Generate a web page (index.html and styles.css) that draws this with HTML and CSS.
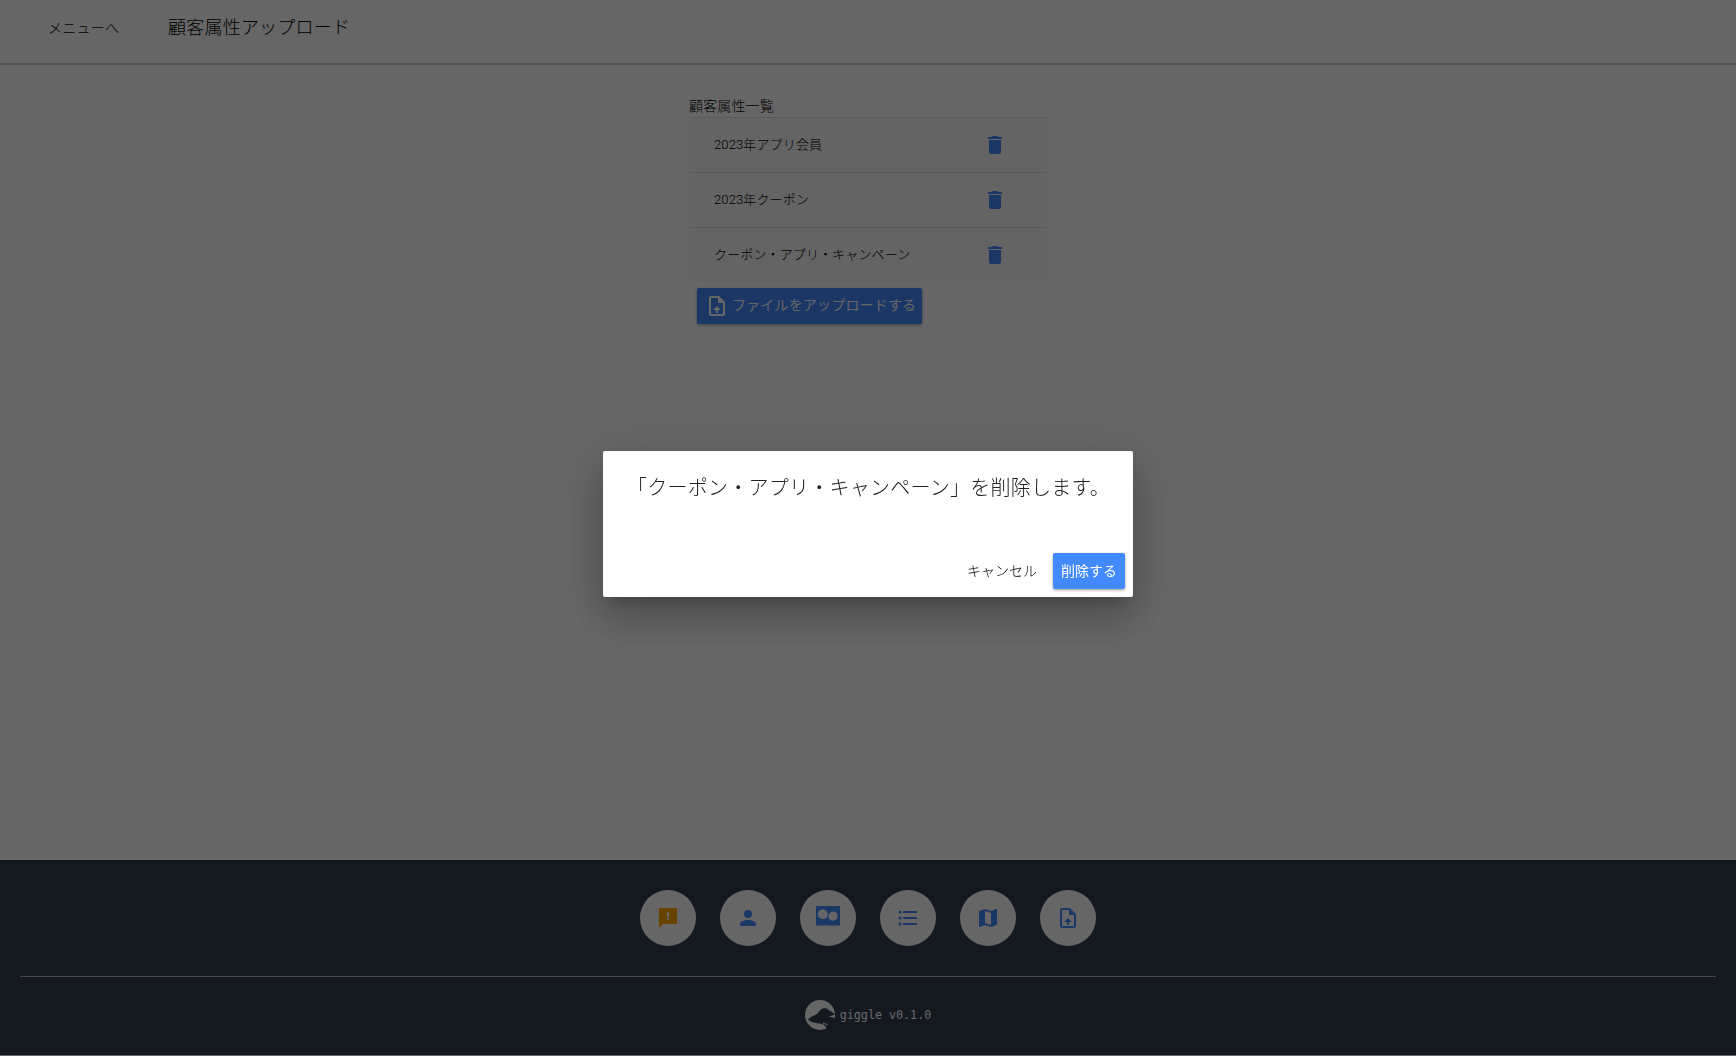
FILE: index.html
```html
<!DOCTYPE html>
<html lang="ja">
<head>
<meta charset="utf-8">
<title>顧客属性アップロード</title>
<link rel="stylesheet" href="styles.css">
</head>
<body>
<div class="app">
  <header class="topbar">
    <a class="back-link">メニューへ</a>
    <h1 class="page-title">顧客属性アップロード</h1>
  </header>
  <main class="content">
    <section class="panel">
      <div class="panel-label">顧客属性一覧</div>
      <ul class="attr-list">
        <li class="attr-row"><span class="attr-name">2023年アプリ会員</span><svg class="trash" viewBox="0 0 24 24"><path d="M19,4H15.5L14.5,3H9.5L8.5,4H5V6H19M6,19A2,2 0 0,0 8,21H16A2,2 0 0,0 18,19V7H6V19Z"/></svg></li>
        <li class="attr-row"><span class="attr-name">2023年クーポン</span><svg class="trash" viewBox="0 0 24 24"><path d="M19,4H15.5L14.5,3H9.5L8.5,4H5V6H19M6,19A2,2 0 0,0 8,21H16A2,2 0 0,0 18,19V7H6V19Z"/></svg></li>
        <li class="attr-row"><span class="attr-name">クーポン・アプリ・キャンペーン</span><svg class="trash" viewBox="0 0 24 24"><path d="M19,4H15.5L14.5,3H9.5L8.5,4H5V6H19M6,19A2,2 0 0,0 8,21H16A2,2 0 0,0 18,19V7H6V19Z"/></svg></li>
      </ul>
      <button class="upload-btn"><svg class="upload-icon" viewBox="0 0 24 24"><path d="M14,2H6A2,2 0 0,0 4,4V20A2,2 0 0,0 6,22H18A2,2 0 0,0 20,20V8L14,2M18,20H6V4H13V9H18V20M12,12L8,16H11V19H13V16H16L12,12Z"/></svg>ファイルをアップロードする</button>
    </section>
  </main>
  <footer class="footer">
    <nav class="nav-circles">
      <a class="circle"><svg class="nav-icon amber" viewBox="0 0 24 24"><path d="M21,2H3V22L7,18H21V2ZM13,12H11V13.9H13ZM13,6H11V11H13Z" fill-rule="evenodd"/></svg></a>
      <a class="circle"><svg class="nav-icon" viewBox="0 0 24 24"><path d="M12,4A4,4 0 0,1 16,8A4,4 0 0,1 12,12A4,4 0 0,1 8,8A4,4 0 0,1 12,4M12,14C16.42,14 20,15.79 20,18V20H4V18C4,15.79 7.58,14 12,14Z"/></svg></a>
      <a class="circle"><svg class="nav-icon wide" viewBox="0 0 24 20"><path fill-rule="evenodd" d="M0,0H24V19.5H0ZM6.7,3.2A5,5 0 1,0 6.8,13.2A5,5 0 1,0 6.7,3.2ZM17,5.5A4.6,4.6 0 1,0 17.1,14.7A4.6,4.6 0 1,0 17,5.5Z"/></svg></a>
      <a class="circle"><svg class="nav-icon" viewBox="0 0 24 24"><path d="M7,5H21V7H7V5M7,13V11H21V13H7M4,4.5A1.5,1.5 0 0,1 5.5,6A1.5,1.5 0 0,1 4,7.5A1.5,1.5 0 0,1 2.5,6A1.5,1.5 0 0,1 4,4.5M4,10.5A1.5,1.5 0 0,1 5.5,12A1.5,1.5 0 0,1 4,13.5A1.5,1.5 0 0,1 2.5,12A1.5,1.5 0 0,1 4,10.5M7,19V17H21V19H7M4,16.5A1.5,1.5 0 0,1 5.5,18A1.5,1.5 0 0,1 4,19.5A1.5,1.5 0 0,1 2.5,18A1.5,1.5 0 0,1 4,16.5Z"/></svg></a>
      <a class="circle"><svg class="nav-icon" viewBox="0 0 24 24"><path d="M15,19L9,16.89V5L15,7.11M20.5,3C20.44,3 20.39,3 20.34,3L15,5.1L9,3L3.36,4.9C3.15,4.97 3,5.15 3,5.38V20.5A0.5,0.5 0 0,0 3.5,21C3.55,21 3.61,21 3.66,20.97L9,18.9L15,21L20.64,19.1C20.85,19 21,18.85 21,18.62V3.5A0.5,0.5 0 0,0 20.5,3Z"/></svg></a>
      <a class="circle"><svg class="nav-icon" viewBox="0 0 24 24"><path d="M14,2H6A2,2 0 0,0 4,4V20A2,2 0 0,0 6,22H18A2,2 0 0,0 20,20V8L14,2M18,20H6V4H13V9H18V20M12,12L8,16H11V19H13V16H16L12,12Z"/></svg></a>
    </nav>
    <hr class="footer-rule">
    <div class="brand">
      <svg class="brand-logo" viewBox="0 0 30 30"><circle cx="15" cy="15" r="15" class="logo-disc"/><path class="logo-shape" d="M3,20C6,16 9,16 12,14C14,12 15,9 18,8.5C21,8 23,8.5 24,10.5C26,11 28,12.5 30,14.5L24,16.5L30,18V24L25,29L22,29.5C21,27 20,25 17,24C13,23 9,23 6,21.5Z"/><circle cx="19" cy="23.5" r="1" class="logo-disc"/><circle cx="21.5" cy="24.5" r="0.9" class="logo-disc"/></svg>
      <span class="brand-text">giggle v0.1.0</span>
    </div>
  </footer>
</div>
<div class="overlay">
  <div class="dialog" role="dialog">
    <div class="dialog-title">「クーポン・アプリ・キャンペーン」を削除します。</div>
    <div class="dialog-actions">
      <button class="btn-text">キャンセル</button>
      <button class="btn-primary">削除する</button>
    </div>
  </div>
</div>
</body>
</html>
```
FILE: styles.css
```css
* { box-sizing: border-box; }
html, body { margin: 0; height: 100%; }
body {
  background: #fff;
  color: #000;
  font-family: Roboto, "Noto Sans CJK JP", sans-serif;
  overflow: hidden;
}
.app { display: flex; flex-direction: column; height: 1055px; }
.topbar {
  height: 65px;
  flex: none;
  display: flex;
  align-items: flex-start;
  padding: 16px 0 0 48px;
  border-bottom: 2px solid #c6c6c6;
  background: #fff;
}
.back-link { font-size: 14px; line-height: 24px; width: 120px; font-weight: 300; letter-spacing: .02em; }
.page-title { margin: 0; font-size: 18px; line-height: 24px; font-weight: 300; letter-spacing: .0125em; }
.content { flex: 1; display: flex; justify-content: center; padding-top: 31px; }
.panel { width: 358px; }
.panel-label { font-size: 14px; line-height: 20px; height: 21px; font-weight: 300; letter-spacing: .01em; }
.attr-list { list-style: none; margin: 0; padding: 0; }
.attr-row {
  height: 55px;
  display: flex;
  align-items: center;
  justify-content: space-between;
  padding: 0 40px 0 25px;
  border-top: 1px solid #e0e0e0;
  background: #fafafa;
}
.attr-name { font-size: 13px; font-weight: 300; letter-spacing: .01em; margin-bottom: 4px; }
.trash { width: 24px; height: 24px; fill: #448aff; }
.upload-btn {
  margin: 6px 0 0 8px;
  height: 36px;
  width: 225px;
  padding: 0 7px 5px 8px;
  display: flex;
  align-items: center;
  gap: 3px;
  border: 0;
  border-radius: 2px;
  background: #448aff;
  color: #fff;
  font: inherit;
  font-size: 14px;
  letter-spacing: .0125em;
  white-space: nowrap;
  box-shadow: 0 1px 3px rgba(0,0,0,.4);
}
.upload-icon { width: 24px; height: 24px; fill: #fff; flex: none; margin-top: 5px; }
.footer {
  flex: none;
  height: 195px;
  background: #323f52;
  display: flex;
  flex-direction: column;
  align-items: stretch;
  padding: 30px 20px 0;
}
.nav-circles { display: flex; justify-content: center; gap: 24px; }
.circle {
  width: 56px;
  height: 56px;
  border-radius: 50%;
  background: #fff;
  display: flex;
  align-items: center;
  justify-content: center;
}
.nav-icon { width: 24px; height: 24px; fill: #448aff; }
.nav-icon.amber { fill: #ffab00; }
.nav-icon.wide { height: 20px; margin-top: -4px; }
.footer-rule { width: 100%; margin: 30px 0 0; border: 0; border-top: 1px solid rgba(255,255,255,.6); }
.brand { display: flex; justify-content: center; align-items: center; gap: 5px; margin-top: 23px; }
.brand-logo { width: 30px; height: 30px; }
.logo-disc { fill: #fff; }
.logo-shape { fill: #323f52; }
.brand-text { font-family: "DejaVu Sans Mono", monospace; font-size: 11.7px; color: #fff; }
.overlay {
  position: fixed;
  inset: 0;
  background: rgba(0,0,0,.6);
  display: flex;
  align-items: center;
  justify-content: center;
  padding-bottom: 8px;
}
.dialog {
  width: 530px;
  height: 146px;
  background: #fff;
  border-radius: 2px;
  display: flex;
  flex-direction: column;
  justify-content: space-between;
  box-shadow: 0 11px 15px -7px rgba(0,0,0,.2), 0 24px 38px 3px rgba(0,0,0,.14), 0 9px 46px 8px rgba(0,0,0,.12);
}
.dialog-title { padding: 21px 24px 0; font-size: 20px; line-height: 32px; font-weight: 300; letter-spacing: .0125em; color: #212121; white-space: nowrap; }
.dialog-actions { display: flex; justify-content: flex-end; align-items: center; gap: 8px; padding: 0 8px 8px; }
.btn-text, .btn-primary {
  height: 36px;
  border: 0;
  border-radius: 2px;
  font: inherit;
  font-size: 14px;
  padding: 0 8px 2px;
  background: none;
  color: #000;
}
.btn-text { font-weight: 300; }
.btn-primary { background: #448aff; color: #fff; box-shadow: 0 1px 3px rgba(0,0,0,.4); }
```
